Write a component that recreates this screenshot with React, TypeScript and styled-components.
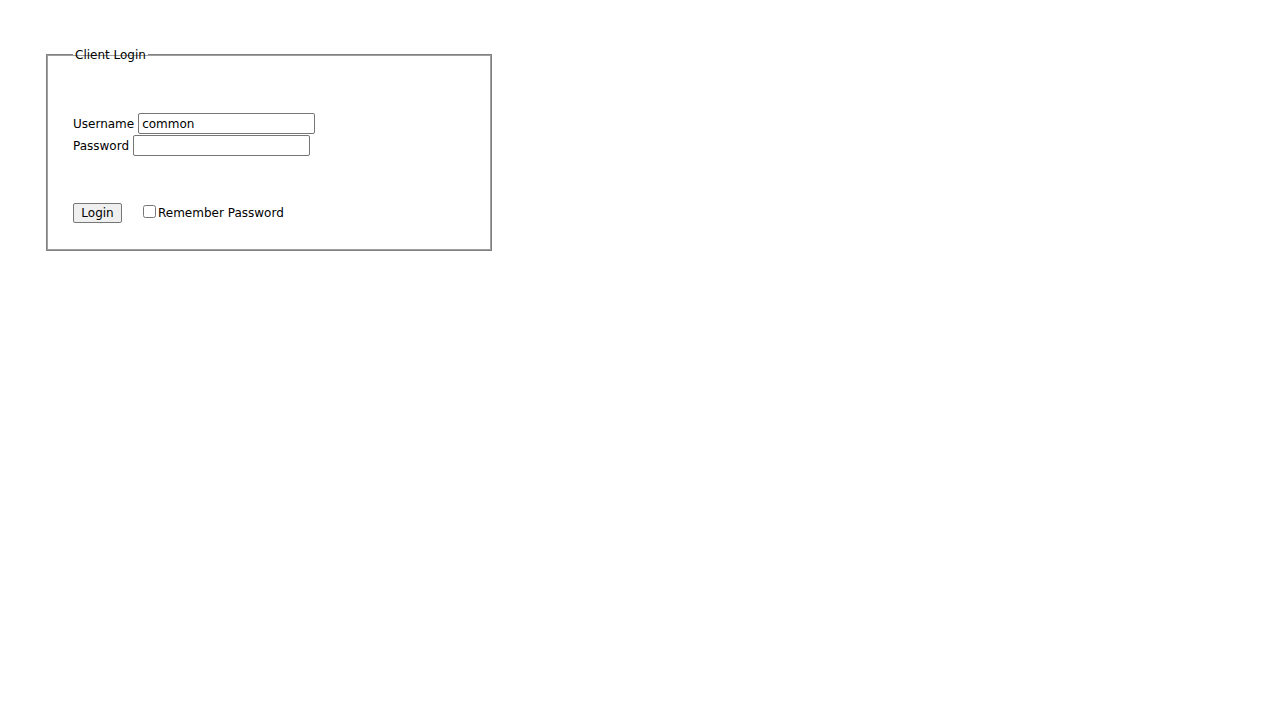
import React from "react";
import styled, { createGlobalStyle } from "styled-components";

const Global = createGlobalStyle`
  html, body { margin: 0; padding: 0; background: #fff; }
  body { font-family: "DejaVu Sans", Verdana, sans-serif; font-size: 12px; color: #000; }
`;

const Page = styled.div`
  padding: 47px 0 0 46px;
`;

const Fieldset = styled.fieldset`
  width: 446px;
  height: 204px;
  box-sizing: border-box;
  margin: 0;
  padding: 0 25px 0 26px;
  border: 1px solid #808080;
  box-shadow: inset 0 0 0 1px #a0a0a0;
  display: flex;
  flex-direction: column;
`;

const Legend = styled.legend`
  padding: 1px 2px 0;
  font-size: 12px;
  line-height: 14px;
`;

const Fields = styled.div`
  margin-top: 51px;
  display: flex;
  flex-direction: column;
  gap: 1px;
`;

const Row = styled.div`
  display: flex;
  align-items: center;
  gap: 4px;
  height: 21px;
`;

const Label = styled.label`
  font-size: 12px;
`;

const TextInput = styled.input`
  width: 177px;
  height: 21px;
  box-sizing: border-box;
  border: 1px solid #767676;
  border-radius: 2px;
  padding: 1px 3px;
  font-family: "DejaVu Sans", Verdana, sans-serif;
  font-size: 12px;
  color: #000;
  outline: none;
`;

const Actions = styled.div`
  margin-top: 47px;
  display: flex;
  align-items: center;
  gap: 21px;
`;

const Button = styled.button`
  height: 20px;
  width: 49px;
  box-sizing: border-box;
  border: 1px solid #767676;
  border-radius: 2px;
  background: #efefef;
  font-family: "DejaVu Sans", Verdana, sans-serif;
  font-size: 12px;
  color: #000;
  padding: 0;
`;

const CheckLabel = styled.label`
  display: flex;
  align-items: center;
  font-size: 12px;
`;

const Check = styled.input`
  margin: 0 2px 3px 0;
  width: 13px;
  height: 13px;
`;

export default function App() {
  return (
    <>
      <Global />
      <Page>
        <Fieldset>
          <Legend>Client Login</Legend>
          <Fields>
            <Row>
              <Label>Username</Label>
              <TextInput defaultValue="common" />
            </Row>
            <Row>
              <Label>Password</Label>
              <TextInput type="password" />
            </Row>
          </Fields>
          <Actions>
            <Button>Login</Button>
            <CheckLabel>
              <Check type="checkbox" />
              Remember Password
            </CheckLabel>
          </Actions>
        </Fieldset>
      </Page>
    </>
  );
}
